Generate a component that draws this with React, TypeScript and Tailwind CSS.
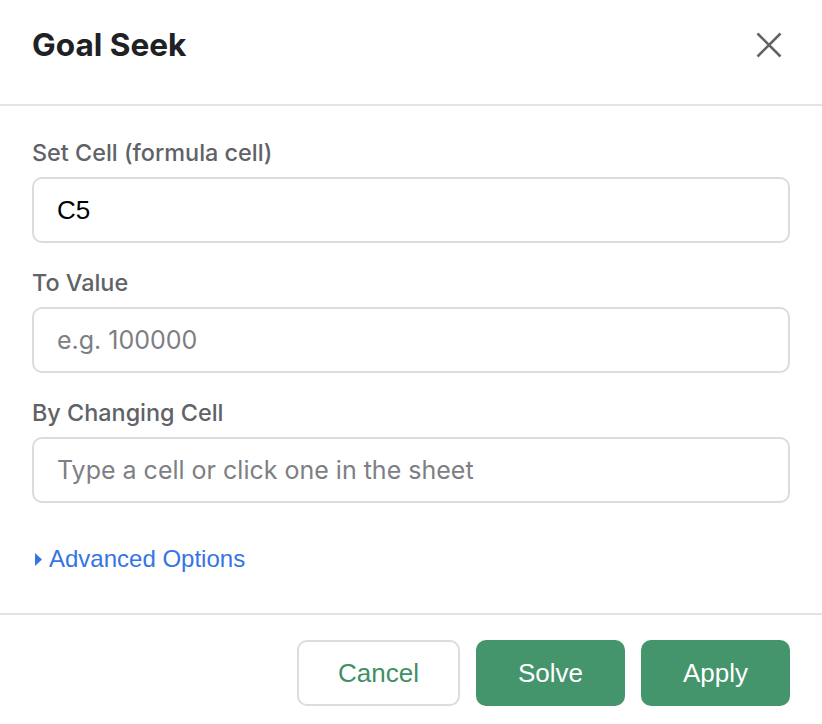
import { useState } from 'react';

const fields = [
  { label: 'Set Cell (formula cell)', value: 'C5', placeholder: '' },
  { label: 'To Value', value: '', placeholder: 'e.g. 100000' },
  { label: 'By Changing Cell', value: '', placeholder: 'Type a cell or click one in the sheet' },
];

function CloseIcon() {
  return (
    <svg width="26" height="26" viewBox="0 0 26 26" fill="none" stroke="#5f6368" strokeWidth="2.6">
      <path d="M1.5 1.5 L24.5 24.5 M24.5 1.5 L1.5 24.5" />
    </svg>
  );
}

export default function App() {
  const [values, setValues] = useState(fields.map((f) => f.value));

  return (
    <div className="w-[822px] h-[724px] bg-white overflow-hidden">
      <div className="h-[106px] border-b-2 border-[#e3e3e3] flex items-start justify-between pl-8 pr-[40px] pt-[26px]">
        <h1
          className="text-[31.6px] leading-[38px] font-bold text-[#202124]"
          style={{ fontFamily: 'Inter, sans-serif' }}
        >
          Goal Seek
        </h1>
        <button className="mt-[6px]">
          <CloseIcon />
        </button>
      </div>

      <div className="px-8 pt-[33px] pb-[40px] border-b-2 border-[#e3e3e3]">
        <div className="flex flex-col gap-[26px]">
          {fields.map((field, i) => (
            <div key={field.label} className="flex flex-col gap-[10px]">
              <label
                className="text-[23.4px] leading-[28px] font-medium text-[#5f6368]"
                style={{ fontFamily: 'Inter, sans-serif' }}
              >
                {field.label}
              </label>
              <input
                value={values[i]}
                placeholder={field.placeholder}
                onChange={(e) => setValues(values.map((v, j) => (j === i ? e.target.value : v)))}
                className={
                  values[i]
                    ? 'h-[66px] w-full rounded-[10px] border-2 border-[#dcdce0] pl-[23px] text-[26px] text-black outline-none'
                    : 'h-[66px] w-full rounded-[10px] border-2 border-[#dcdce0] pl-[23px] text-[25px] text-black outline-none placeholder:text-[#7d7f84]'
                }
                style={{
                  fontFamily: values[i] ? '"Liberation Sans", Arial, sans-serif' : 'Inter, sans-serif',
                }}
              />
            </div>
          ))}
        </div>

        <button
          className="mt-[42px] ml-[3px] flex items-center gap-[7px] text-[24px] leading-[28px] text-[#3574e3]"
          style={{ fontFamily: '"Liberation Sans", Arial, sans-serif' }}
        >
          <svg width="7" height="13" viewBox="0 0 7 13">
            <path d="M0 0 L7 6.5 L0 13 Z" fill="#3574e3" />
          </svg>
          Advanced Options
        </button>
      </div>

      <div
        className="flex justify-end gap-4 px-8 pt-[25px]"
        style={{ fontFamily: '"Liberation Sans", Arial, sans-serif' }}
      >
        <button className="h-[66px] w-[163px] rounded-[10px] border-2 border-[#dcdce0] text-[26px] text-[#3f9066]">
          Cancel
        </button>
        <button className="h-[66px] w-[149px] rounded-[10px] bg-[#44946c] text-[26px] text-white">Solve</button>
        <button className="h-[66px] w-[149px] rounded-[10px] bg-[#44946c] text-[26px] text-white">Apply</button>
      </div>
    </div>
  );
}
